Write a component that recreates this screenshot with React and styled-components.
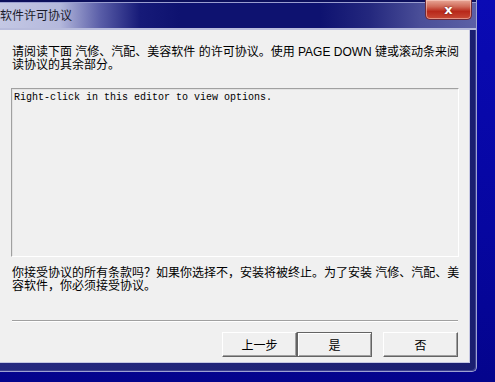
import React from "react";
import styled, { createGlobalStyle } from "styled-components";

const GlobalStyle = createGlobalStyle`
  html, body {
    margin: 0;
    padding: 0;
    background: #0808a2;
    width: 495px;
    height: 382px;
    overflow: hidden;
  }
  body {
    font-family: "Liberation Sans", "Noto Sans CJK SC", sans-serif;
    font-size: 12px;
    color: #000;
  }
`;

const Desktop = styled.div`
  width: 495px;
  height: 382px;
  background: linear-gradient(to bottom, #0a0ab4 0%, #0606a0 60%, #04048c 100%);
`;

const Window = styled.div`
  width: 477px;
  height: 372px;
  box-sizing: border-box;
  display: flex;
  flex-direction: column;
  background: linear-gradient(to right, #262a80, #1a1e70);
  border-right: 1px solid #9ea2d2;
  border-bottom: 1px solid #9ea2d2;
  border-bottom-right-radius: 5px;
  box-shadow: inset -1px -1px 0 #3c4090;
`;

const TitleBar = styled.div`
  height: 30px;
  flex-shrink: 0;
  display: flex;
  align-items: flex-start;
  justify-content: space-between;
  box-sizing: border-box;
  background: linear-gradient(
    to right,
    #c4c8e4 0px,
    #b4b8dc 60px,
    #5a5ea8 100px,
    #161a78 140px,
    #0e1270 180px,
    #0e1270 320px,
    #24287e 370px,
    #4a4e98 420px,
    #5c60a6 476px
  );
  box-shadow: inset 0 2px 0 #0c0f5c, inset 0 3px 0 #9a9ed0, inset 0 -2px 0 #b8bcdc;
`;

const Title = styled.span`
  font-family: "Noto Sans CJK SC", sans-serif;
  font-size: 12px;
  line-height: 30px;
  color: #1a1a2a;
`;

const CloseButton = styled.div`
  width: 47px;
  height: 20px;
  margin-right: 4px;
  box-sizing: border-box;
  display: flex;
  align-items: center;
  justify-content: center;
  border: 1px solid #6a2a3a;
  border-top: none;
  border-radius: 0 0 5px 5px;
  background: linear-gradient(to bottom, #e8a898 0%, #d06a58 35%, #b8281a 60%, #c84a36 100%);
  box-shadow: inset 0 0 0 1px rgba(255, 220, 210, 0.5);
  color: #fff;
  font-family: "DejaVu Sans", sans-serif;
  font-weight: bold;
  font-size: 13px;
  text-shadow: 0 0 2px #5a1010;
`;

const Client = styled.div`
  width: 470px;
  height: 333px;
  box-sizing: border-box;
  background: #f0f0f0;
  display: flex;
  flex-direction: column;
  padding: 16px 11px 0 12px;
  border-right: 1px solid #c6c8e2;
  border-bottom: 1px solid #c6c8e2;
`;

const Para = styled.p`
  margin: 0;
  margin-top: ${(p) => p.$top || 0}px;
  line-height: 13px;
  font-size: 12px;
  white-space: nowrap;
`;

const Editor = styled.div`
  margin-top: 16px;
  margin-left: -1px;
  width: 448px;
  height: 169px;
  box-sizing: border-box;
  border-top: 1px solid #a0a0a0;
  border-left: 1px solid #a0a0a0;
  border-right: 1px solid #ffffff;
  border-bottom: 1px solid #ffffff;
  box-shadow: inset 1px 1px 0 #e3e3e3;
  background: #f0f0f0;
  padding: 3px 2px;
  font-family: "Liberation Mono", monospace;
  font-size: 10px;
  line-height: 12px;
`;

const Separator = styled.div`
  margin-top: 27px;
  width: 446px;
  border-top: 1px solid #a0a0a0;
  border-bottom: 1px solid #ffffff;
`;

const ButtonRow = styled.div`
  margin-top: 10px;
  display: flex;
  justify-content: flex-end;
`;

const Button = styled.div`
  width: 75px;
  height: 25px;
  box-sizing: border-box;
  margin-left: ${(p) => p.$gap || 0}px;
  display: flex;
  align-items: center;
  justify-content: center;
  background: #f0f0f0;
  font-family: "Noto Sans CJK SC", sans-serif;
  font-size: 12px;
  border-top: 1px solid ${(p) => (p.$default ? "#646464" : "#ffffff")};
  border-left: 1px solid ${(p) => (p.$default ? "#646464" : "#ffffff")};
  border-right: 1px solid #646464;
  border-bottom: 1px solid #646464;
  box-shadow: ${(p) =>
    p.$default
      ? "inset 1px 1px 0 #ffffff, inset -1px -1px 0 #a0a0a0"
      : "inset -1px -1px 0 #a0a0a0"};
`;

export default function App() {
  return (
    <Desktop>
      <GlobalStyle />
      <Window>
        <TitleBar>
          <Title>软件许可协议</Title>
          <CloseButton>x</CloseButton>
        </TitleBar>
        <Client>
          <Para>
            请阅读下面 汽修、汽配、美容软件 的许可协议。使用 PAGE DOWN 键或滚动条来阅
            <br />
            读协议的其余部分。
          </Para>
          <Editor>Right-click in this editor to view options.</Editor>
          <Para $top={10}>
            你接受协议的所有条款吗？如果你选择不，安装将被终止。为了安装 汽修、汽配、美
            <br />
            容软件，你必须接受协议。
          </Para>
          <Separator />
          <ButtonRow>
            <Button>上一步</Button>
            <Button $default>是</Button>
            <Button $gap={11}>否</Button>
          </ButtonRow>
        </Client>
      </Window>
    </Desktop>
  );
}
